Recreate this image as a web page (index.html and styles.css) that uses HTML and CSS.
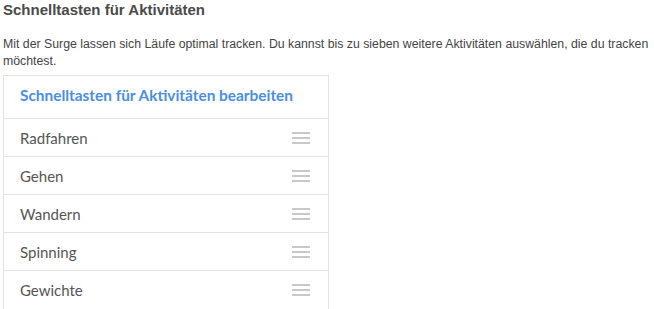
FILE: index.html
```html
<!DOCTYPE html>
<html>
<head>
	<meta charset="utf-8">
	<title>Schnelltasten</title>
	<link rel="stylesheet" href="styles.css">
</head>
<body>
	<div class="page">
		<h2 class="title">Schnelltasten für Aktivitäten</h2>
		<p class="intro">Mit der Surge lassen sich Läufe optimal tracken. Du kannst bis zu sieben weitere Aktivitäten auswählen, die du tracken möchtest.</p>
		<div class="panel">
			<div class="panelHead"><a href="javascript:void(0)">Schnelltasten für Aktivitäten bearbeiten</a></div>
			<ul class="list">
				<li><span>Radfahren</span><i class="handle"></i></li>
				<li><span>Gehen</span><i class="handle"></i></li>
				<li><span>Wandern</span><i class="handle"></i></li>
				<li><span>Spinning</span><i class="handle"></i></li>
				<li><span>Gewichte</span><i class="handle"></i></li>
			</ul>
		</div>
	</div>
</body>
</html>
```
FILE: styles.css
```css
*{
	margin: 0;
	padding: 0;
}
body{
	background: #fff;
	font: 12.3px/17px "Liberation Sans", Arial, sans-serif;
	color: #444;
}
.page{
	padding: 1px 3px;
}
.title{
	font: 700 15px/18px "Liberation Sans", Arial, sans-serif;
	color: #4a4a4a;
	margin-bottom: 17px;
}
.intro{
	color: #444;
	margin-bottom: 5px;
}
.panel{
	width: 324px;
	border: 1px solid #e2e2e2;
	border-bottom: 0;
}
.panelHead{
	height: 42px;
	line-height: 42px;
	padding: 0 16px;
	border-bottom: 1px solid #e2e2e2;
}
.panelHead a{
	font: 700 15.4px "Lato", sans-serif;
	color: #4a8ee2;
	text-decoration: none;
}
.list li{
	list-style: none;
	display: flex;
	align-items: center;
	justify-content: space-between;
	height: 37px;
	padding: 0 18px 0 16px;
	border-bottom: 1px solid #e2e2e2;
	font: 15px "Lato", sans-serif;
	color: #555;
}
.list li:last-child{
	border-bottom: 0;
	height: 37px;
	padding-bottom: 4px;
}
.handle{
	width: 18px;
	height: 2px;
	background: #c8c8c8;
	box-shadow: 0 -5px 0 #c8c8c8, 0 5px 0 #c8c8c8;
}
```
